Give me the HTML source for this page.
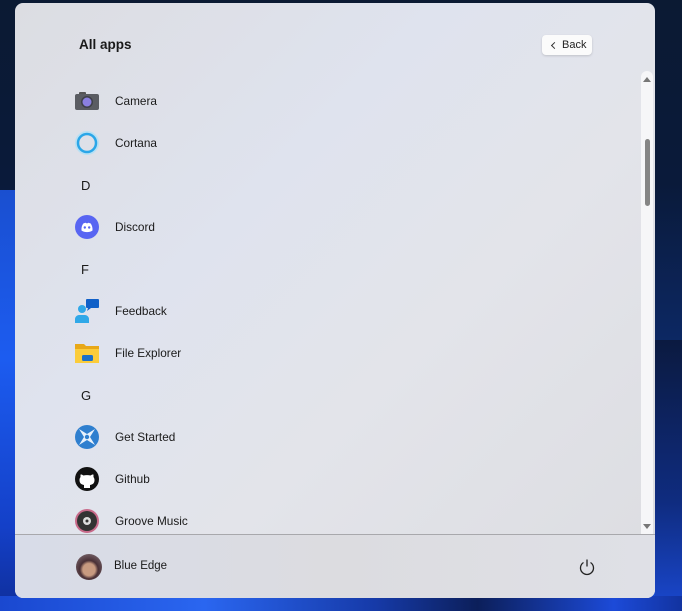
<!DOCTYPE html>
<html><head><meta charset="utf-8"><style>
*{margin:0;padding:0;box-sizing:border-box}
body{width:682px;height:611px;overflow:hidden;position:relative;font-family:"Segoe UI","Liberation Sans",sans-serif;
background:linear-gradient(180deg,#0b1a33 0%,#0a1a3a 30%,#0d2a6a 60%,#0f3fb0 85%,#1a4fd8 100%)}
.bgl{position:absolute;left:0;top:190px;width:20px;height:421px;background:linear-gradient(180deg,#1a4fd0,#1c5cf0 40%,#1440c8 80%,#0f2e9a)}
.bgb{position:absolute;left:0;top:596px;width:682px;height:15px;background:linear-gradient(90deg,#1a48d0,#2a66f0 30%,#163aa8 55%,#0c1f5a 70%,#1c4ad8 90%,#1233a0)}
.bgr{position:absolute;right:0;top:340px;width:27px;height:271px;background:linear-gradient(180deg,#0b1a40,#0f2c80 60%,#1a48d0)}
.panel{position:absolute;left:15px;top:3px;width:640px;height:595px;border-radius:8px;overflow:hidden;
background:linear-gradient(135deg,#dcdde2 0%,#dfe3ee 35%,#e3e4ea 60%,#dcdde1 100%)}
.title{position:absolute;left:64px;top:34px;font-size:13.5px;font-weight:600;color:#1a1a1a}
.back{position:absolute;left:527px;top:32px;width:50px;height:20px;background:#fbfbfb;border-radius:4px;box-shadow:0 1px 2px rgba(0,0,0,.15);font-size:11px;color:#222;padding-left:20px;line-height:20px}
.back:before{content:"";position:absolute;left:10px;top:8px;width:4px;height:4px;border-left:1px solid #333;border-bottom:1px solid #333;transform:rotate(45deg)}
.item{position:absolute;left:60px;height:26px;display:flex;align-items:center;font-size:11.8px;color:#1a1a1a}
.item .ic{width:24px;height:24px;margin-right:16px;position:relative}
.letter{position:absolute;left:66px;font-size:13px;color:#1a1a1a}
.sb{position:absolute;left:626px;top:68px;width:12px;height:463px;background:#f6f6f8;border-radius:6px 6px 0 0}
.thumb{position:absolute;left:630px;top:136px;width:5px;height:67px;background:#858585;border-radius:3px}
.footer{position:absolute;left:0;top:531px;width:640px;height:64px;border-top:1px solid #a8a8ac;background:linear-gradient(90deg,#d8dce8,#dcdce0 50%,#dfe0e6)}
</style></head><body>
<div class="bgl"></div><div class="bgr"></div><div class="bgb"></div>
<div class="panel">
<div class="title">All apps</div>
<div class="back">Back</div>

<div class="item" style="top:85px"><div class="ic"><svg width="24" height="24"><rect x="4" y="3" width="7" height="4" rx="1" fill="#555"/><rect x="0" y="5" width="24" height="16" rx="2" fill="#5a5c62"/><circle cx="12" cy="13" r="6" fill="#3e4048"/><circle cx="12" cy="13" r="4.5" fill="#8a7fe0"/></svg></div>Camera</div>
<div class="item" style="top:127px"><div class="ic"><svg width="24" height="24"><circle cx="12" cy="12" r="10" fill="none" stroke="#9ee0fb" stroke-width="4" opacity=".6"/><circle cx="12" cy="12" r="9" fill="none" stroke="#2aa6e8" stroke-width="2.5"/></svg></div>Cortana</div>
<div class="letter" style="top:175px">D</div>
<div class="item" style="top:211px"><div class="ic"><svg width="24" height="24"><circle cx="12" cy="12" r="12" fill="#5865f2"/><path d="M6.5 15.5c1.5 1.2 3.5 1.6 5.5 1.6s4-.4 5.5-1.6c.2-2.6-.4-5-1.8-7-1-.5-2-.7-2.6-.8l-.3.6c-.5-.1-1.1-.1-1.6 0l-.3-.6c-.8.1-1.7.3-2.6.8-1.5 2-2 4.4-1.8 7z" fill="#fff"/><circle cx="9.8" cy="12.5" r="1.2" fill="#5865f2"/><circle cx="14.2" cy="12.5" r="1.2" fill="#5865f2"/></svg></div>Discord</div>
<div class="letter" style="top:259px">F</div>
<div class="item" style="top:295px"><div class="ic"><svg width="24" height="24"><rect x="11" y="0" width="13" height="9" rx="1" fill="#1060c8"/><path d="M13 9l-1 3 4-3z" fill="#1060c8"/><circle cx="7" cy="10" r="4" fill="#30a8e8"/><path d="M0 24v-4c0-2 2-4 4-4h6c2 0 4 2 4 4v4z" fill="#30a8e8"/></svg></div>Feedback</div>
<div class="item" style="top:337px"><div class="ic"><svg width="24" height="24"><path d="M0 3h9l2 2h13v17H0z" fill="#e8a818"/><rect x="0" y="8" width="24" height="14" fill="#fbcc3a"/><rect x="7" y="14" width="11" height="6" rx="1.5" fill="#1c70c8"/></svg></div>File Explorer</div>
<div class="letter" style="top:385px">G</div>
<div class="item" style="top:421px"><div class="ic"><svg width="24" height="24"><circle cx="12" cy="12" r="12" fill="#2f7fcf"/><path d="M4 4l8 5 8-5-5 8 5 8-8-5-8 5 5-8z" fill="#e8f2fc"/><circle cx="12" cy="12" r="2.2" fill="#2f7fcf"/></svg></div>Get Started</div>
<div class="item" style="top:463px"><div class="ic"><svg width="24" height="24"><circle cx="12" cy="12" r="12" fill="#111"/><path d="M9 21v-3c-3-.5-4.5-2-4.5-5 0-1.2.4-2.2 1.1-3-.2-.6-.2-1.6.1-2.6 1 0 2 .6 2.7 1.1.9-.3 2.2-.4 3.6-.4s2.7.1 3.6.4c.7-.5 1.7-1.1 2.7-1.1.3 1 .3 2 .1 2.6.7.8 1.1 1.8 1.1 3 0 3-1.5 4.5-4.5 5v3z" fill="#fff"/></svg></div>Github</div>
<div class="item" style="top:505px"><div class="ic"><svg width="24" height="24"><circle cx="12" cy="12" r="12" fill="#c86a8a"/><circle cx="12" cy="12" r="10" fill="#333"/><circle cx="12" cy="12" r="4" fill="#ddd"/><circle cx="12" cy="12" r="1.5" fill="#333"/></svg></div>Groove Music</div>

<div class="sb"></div>
<svg style="position:absolute;left:628px;top:73px" width="8" height="6"><path d="M0 6L4 1L8 6z" fill="#777"/></svg>
<svg style="position:absolute;left:628px;top:521px" width="8" height="6"><path d="M0 0L4 5L8 0z" fill="#777"/></svg>
<div class="thumb"></div>

<div class="footer">
<div style="position:absolute;left:61px;top:19px;width:26px;height:26px;border-radius:50%;background:radial-gradient(circle at 50% 60%,#c89a80 0 30%,#4a3036 45%,#8a7a80 100%)"></div>
<div style="position:absolute;left:99px;top:25px;font-size:11.5px;color:#1a1a1a">Blue Edge</div>
<svg style="position:absolute;left:563px;top:23px" width="18" height="18"><path d="M5.5 4.5A6.5 6.5 0 1 0 12.5 4.5" fill="none" stroke="#222" stroke-width="1.3"/><path d="M9 1.5v7" stroke="#222" stroke-width="1.3"/></svg>
</div>
</div>
</body></html>
